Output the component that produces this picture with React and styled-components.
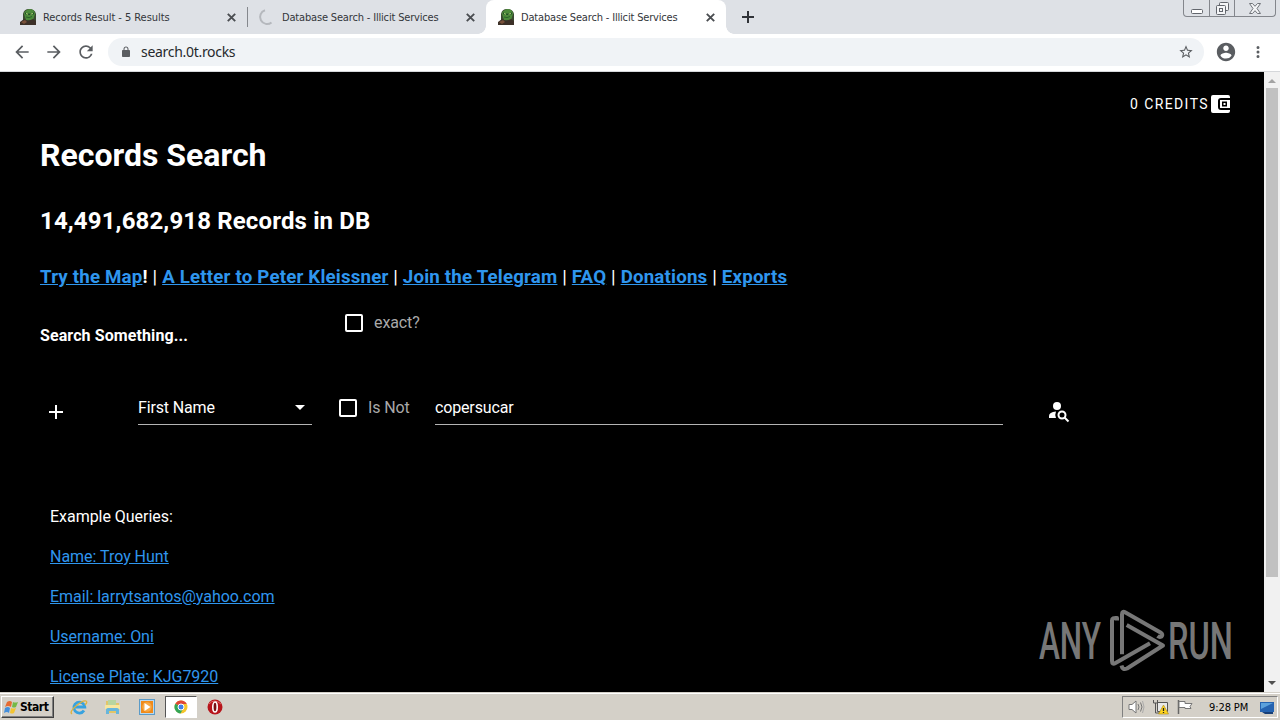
import React, { Component } from 'react';
import styled, { createGlobalStyle } from 'styled-components';

const GlobalStyle = createGlobalStyle`
  *,
  *::before,
  *::after {
    box-sizing: border-box;
  }

  body {
    margin: 0;
    overflow: hidden;
    font-family: Roboto, 'Liberation Sans', sans-serif;
  }

  svg {
    display: block;
    flex: none;
    overflow: visible;
  }
`;

const Screen = styled.div`
  width: 1280px;
  height: 720px;
  display: flex;
  flex-direction: column;
  overflow: hidden;
`;

/* browser window */
const TabStrip = styled.div`
  height: 34px;
  flex: none;
  display: flex;
  background: #dee1e6;
`;

const StyledTab = styled.div`
  width: ${({ $width }) => $width}px;
  height: 34px;
  padding: 0 11px 0 ${({ $left }) => $left}px;
  display: flex;
  align-items: center;
  position: relative;
  background: ${({ $active }) => ($active ? '#fff' : 'transparent')};
  border-radius: 8px 8px 0 0;
  color: #33363a;

  .tab-title {
    margin-left: 7px;
    padding-top: 2px;
    flex: 1;
    font: 11px/16px 'DejaVu Sans Condensed', 'DejaVu Sans', sans-serif;
    font-stretch: condensed;
    letter-spacing: ${({ $spacing }) => $spacing || -0.17}px;
    white-space: nowrap;
  }

  &::before,
  &::after {
    content: '';
    display: ${({ $active }) => ($active ? 'block' : 'none')};
    position: absolute;
    bottom: 0;
    width: 8px;
    height: 8px;
  }

  &::before {
    left: -8px;
    background: radial-gradient(circle at 0 0, transparent 7.5px, #fff 8px);
  }

  &::after {
    right: -8px;
    background: radial-gradient(circle at 100% 0, transparent 7.5px, #fff 8px);
  }
`;

const TabDivider = styled.div`
  width: 1px;
  height: 20px;
  margin-top: 7px;
  background: #85888d;
`;

const NewTab = styled.div`
  padding: 11px 0 0 16px;
  flex: 1;
`;

const WindowButtons = styled.div`
  width: 93px;
  height: 17px;
  margin-right: 4px;
  display: flex;
  border: 1px solid #83868c;
  border-top: 0;
  border-radius: 0 0 4px 4px;

  span {
    display: flex;
    align-items: center;
    justify-content: center;
    width: 25px;
  }

  span + span {
    border-left: 1px solid #83868c;
  }

  span:last-child {
    flex: 1;
  }
`;

const Toolbar = styled.div`
  height: 38px;
  flex: none;
  display: flex;
  align-items: center;
  padding: 0 13px 2px 12px;
  background: #fff;
  border-bottom: 1px solid #d5d7da;
`;

const NavIcon = styled.div`
  width: 32px;
  display: flex;
`;

const Omnibox = styled.div`
  width: 1096px;
  height: 28px;
  padding: 0 10px 0 12px;
  display: flex;
  align-items: center;
  border-radius: 14px;
  background: #f0f3f6;

  span {
    flex: 1;
    margin-left: 9px;
    color: #26292c;
    font: 14px/18px 'Noto Sans', 'Open Sans', sans-serif;
    letter-spacing: -0.3px;
  }
`;

const ToolbarEnd = styled.div`
  flex: 1;
  padding-left: 11px;
  display: flex;
  align-items: center;
  justify-content: space-between;
`;

const Viewport = styled.div`
  height: 620px;
  flex: none;
  display: flex;
  background: #000;
`;

const Page = styled.main`
  width: 1264px;
  height: 620px;
  padding: 14px 33px 0 40px;
  position: relative;
  overflow: hidden;
  color: #fff;
  font-size: 16px;
  white-space: nowrap;

  a {
    color: #2f96ee;
    text-decoration: underline;
  }
`;

const Credits = styled.div`
  height: 36px;
  display: flex;
  align-items: center;
  justify-content: flex-end;
  gap: 2px;
  font-size: 14px;
  letter-spacing: 1.4px;
`;

const Title = styled.h1`
  margin: 14px 0 0;
  font-size: 32px;
  line-height: 38px;
  font-weight: 700;
`;

const Count = styled.h2`
  margin: 33px 0 0;
  font-size: 24px;
  line-height: 28px;
  font-weight: 700;
  letter-spacing: 0.14px;
`;

const Links = styled.h3`
  margin: 30px 0 0;
  font-size: 18.72px;
  line-height: 24px;
  font-weight: 700;
  letter-spacing: 0.18px;

  i {
    font-style: normal;
    font-weight: 400;
  }
`;

const SearchHeader = styled.div`
  height: 44px;
  margin-top: 13px;
  display: flex;

  strong {
    width: 305px;
    padding-top: 23px;
    font-weight: 700;
    line-height: 21px;
    letter-spacing: 0.1px;
  }
`;

const CheckField = styled.div`
  height: 18px;
  display: flex;
  align-items: center;
  gap: 11px;
  line-height: 18px;
  letter-spacing: -0.1px;
  color: #a9a9a9;

  &::before {
    content: '';
    width: 18px;
    height: 18px;
    border: 2px solid #fff;
    border-radius: 2px;
  }
`;

const ExactCheck = styled(CheckField)`
  margin-top: 12px;
`;

const NegateCheck = styled(CheckField)`
  width: 96px;
  margin: 7px 0 0 27px;
`;

const QueryRow = styled.div`
  height: 40px;
  margin-top: 46px;
  display: flex;

  .add {
    width: 98px;
    padding: 12px 0 0 8px;
  }

  .find {
    padding: 9px 0 0 45px;
  }
`;

const Field = styled.div`
  width: ${({ $width }) => $width}px;
  height: 33px;
  display: flex;
  align-items: center;
  justify-content: space-between;
  border-bottom: 1px solid #b4b4b4;
  padding: 0 7px 2px 0;
  letter-spacing: -0.15px;
`;

const Examples = styled.div`
  margin: 75px 0 0 10px;
  display: flex;
  flex-direction: column;
  align-items: flex-start;
  gap: 20px;
  line-height: 20px;
  letter-spacing: -0.03px;
`;

const Watermark = styled.div`
  position: absolute;
  left: 1036px;
  top: 536px;
`;

const Scrollbar = styled.div`
  width: 16px;
  display: flex;
  flex-direction: column;
  align-items: center;
  justify-content: space-between;
  padding: 6px 0;
  background: #f1f1f1;

  .thumb {
    width: 12px;
    height: 489px;
    margin: 5px 0 auto;
    background: #c1c1c1;
  }
`;

/* desktop taskbar */
const Taskbar = styled.div`
  height: 28px;
  display: flex;
  align-items: center;
  padding: 2px 2px 0 1px;
  background: #d4d0c8;
  box-shadow: inset 0 1px #d4d0c8, inset 0 2px #fff;
`;

const StartButton = styled.div`
  width: 53px;
  height: 22px;
  padding-left: 2px;
  display: flex;
  align-items: center;
  gap: 1px;
  border: 1px solid;
  border-color: #fff #404040 #404040 #fff;
  box-shadow: inset -1px -1px #808080;
  color: #000;
  font: bold 12px/16px 'DejaVu Sans Condensed', 'DejaVu Sans', sans-serif;
  font-stretch: condensed;
  letter-spacing: -0.45px;
`;

const QuickLaunch = styled.div`
  flex: 1;
  margin-left: 8px;
  display: flex;
  align-items: center;
`;

const TaskIcon = styled.div`
  width: ${({ $pressed }) => ($pressed ? 32 : 34)}px;
  height: 22px;
  margin: 0 ${({ $pressed }) => ($pressed ? 1 : 0)}px;
  display: flex;
  align-items: center;
  justify-content: center;
  background: ${({ $pressed }) => ($pressed ? '#fff' : 'none')};
  border: ${({ $pressed }) => ($pressed ? '1px solid' : 0)};
  border-color: #555 #fff #fff #555;
`;

const Tray = styled.div`
  width: 156px;
  height: 22px;
  display: flex;
  align-items: center;
  padding-left: 5px;
  border: 1px solid;
  border-color: #808080 #fff #fff #808080;

  span {
    margin: 0 9px 0 15px;
    padding-top: 1px;
    width: 41px;
    font: 11px/16px 'DejaVu Sans Condensed', 'DejaVu Sans', sans-serif;
    font-stretch: condensed;
    letter-spacing: -0.1px;
    white-space: nowrap;
    color: #000;
  }
`;

const TrayIcon = styled.div`
  width: 24px;
`;

const FrogIcon = () => (
  <svg width="16" height="16" viewBox="0 0 16 16">
    <path d="M3 11V5Q4 0 9 0q6 0 7 5v11H4z" fill="#3a4a31" />
    <path d="M4 5Q4 2 7 1q3-2 6 0 2 1 2 4l-2 6H6z" fill="#4c8a3a" />
    <path d="M5 3.5l4 1.2 5-1.2v1.8l-4 .8-5-.8z" fill="#1f4a26" />
    <path d="M6 4.5l2 .7M10.5 5.2l2.5-.7" stroke="#b4dc76" />
    <path d="M6 8q3 1.5 6-.5" stroke="#2b632b" fill="none" />
    <path d="M0 16v-3l4-3 4 2 5-2 3 2v4z" fill="#3c3028" />
    <path d="M1 13l4-2 2 2-3 2z" fill="#79513a" />
  </svg>
);

const CloseIcon = () => (
  <svg width="9" height="9" viewBox="0 0 9 9">
    <path d="M.8.8l7.4 7.4M8.2.8L.8 8.2" stroke="#4a4d51" strokeWidth="1.9" />
  </svg>
);

const Tab = ({ title, loading, ...rest }) => (
  <StyledTab {...rest}>
    {loading ? (
      <svg width="16" height="16" viewBox="0 0 16 16">
        <path d="M6 1.3A7 7 0 1 0 12.5 13.4" fill="none" stroke="#b5b8bd" strokeWidth="2" />
      </svg>
    ) : (
      <FrogIcon />
    )}
    <span className="tab-title">{title}</span>
    <CloseIcon />
  </StyledTab>
);

const MaterialIcon = ({ d, size = 20, color = '#5a5d61' }) => (
  <svg width={size} height={size} viewBox="0 0 24 24" fill={color}>
    <path d={d} />
  </svg>
);

const BACK = 'M20 11H7.83l5.59-5.59L12 4l-8 8 8 8 1.41-1.41L7.83 13H20v-2z';
const FORWARD = 'M12 4l-1.41 1.41L16.17 11H4v2h12.17l-5.58 5.59L12 20l8-8z';
const RELOAD =
  'M17.65 6.35A7.958 7.958 0 0 0 12 4c-4.42 0-7.99 3.58-7.99 8s3.57 8 7.99 8c3.73 0 6.84-2.55 7.73-6h-2.08A5.99 5.99 0 0 1 12 18c-3.31 0-6-2.69-6-6s2.69-6 6-6c1.66 0 3.14.69 4.22 1.78L13 11h7V4l-2.35 2.35z';
const LOCK =
  'M18 8h-1V6c0-2.76-2.24-5-5-5S7 3.24 7 6v2H6c-1.1 0-2 .9-2 2v10c0 1.1.9 2 2 2h12c1.1 0 2-.9 2-2V10c0-1.1-.9-2-2-2zM9 6c0-1.66 1.34-3 3-3s3 1.34 3 3v2H9V6z';
const STAR =
  'M22 9.24l-7.19-.62L12 2 9.19 8.63 2 9.24l5.46 4.73L5.82 21 12 17.27 18.18 21l-1.63-7.03L22 9.24zM12 15.4l-3.76 2.27 1-4.28-3.32-2.88 4.38-.38L12 6.1l1.71 4.04 4.38.38-3.32 2.88 1 4.28L12 15.4z';
const ACCOUNT =
  'M12 2C6.48 2 2 6.48 2 12s4.48 10 10 10 10-4.48 10-10S17.52 2 12 2zm0 3c1.66 0 3 1.34 3 3s-1.34 3-3 3-3-1.34-3-3 1.34-3 3-3zm0 14.2c-2.5 0-4.71-1.28-6-3.22.03-1.99 4-3.08 6-3.08 1.99 0 5.97 1.09 6 3.08A7.2 7.2 0 0 1 12 19.2z';
const MORE = 'M12 8a2 2 0 1 0 0-4 2 2 0 0 0 0 4zm0 2a2 2 0 1 0 0 4 2 2 0 0 0 0-4zm0 6a2 2 0 1 0 0 4 2 2 0 0 0 0-4z';

const LINKS = ['A Letter to Peter Kleissner', 'Join the Telegram', 'FAQ', 'Donations', 'Exports'];
const QUERIES = ['Name: Troy Hunt', 'Email: larrytsantos@yahoo.com', 'Username: Oni', 'License Plate: KJG7920'];

const AnyRunLogo = () => (
  <svg width="206" height="66" viewBox="0 0 206 66" fill="#777">
    <text x="3" y="51" fontFamily="Roboto" fontSize="52" fontWeight="500" textLength="62" lengthAdjust="spacingAndGlyphs">
      ANY
    </text>
    <text x="132" y="51" fontFamily="Roboto" fontSize="52" fontWeight="500" textLength="65" lengthAdjust="spacingAndGlyphs">
      RUN
    </text>
    <g fill="none" stroke="#777" strokeWidth="4" strokeLinejoin="round">
      <path d="M81 12.5V10q-5-.5-5 2.5V53q0 4 3.5 2L114 35.3" />
      <path d="M86 46.3V6.5q0-4 3.5-2L124.5 24.5q3 2 1 4-2 1-4-.5" />
      <path d="M90.7 17L127 37.5 91 60.5q-4.5 2-5.5-3" />
    </g>
  </svg>
);

class App extends Component {
  renderBrowser() {
    return (
      <>
        <TabStrip>
          <Tab $width={247} $left={20} $spacing={-0.05} title="Records Result - 5 Results" />
          <TabDivider />
          <Tab $width={238} $left={11} loading title="Database Search - Illicit Services" />
          <Tab $width={240} $left={12} $active title="Database Search - Illicit Services" />
          <NewTab>
            <svg width="12" height="12" viewBox="0 0 12 12">
              <path d="M6 0v12M0 6h12" stroke="#303338" strokeWidth="2" />
            </svg>
          </NewTab>
          <WindowButtons>
            <span>
              <svg width="12" height="14" viewBox="0 0 12 14">
                <rect x=".5" y="8.5" width="11" height="4" rx="1" fill="#fff" stroke="#62666d" />
              </svg>
            </span>
            <span>
              <svg width="13" height="13" viewBox="0 0 13 13" fill="#f4f5f7" stroke="#62666d">
                <rect x="3.5" y=".5" width="9" height="8" rx="1" />
                <rect x=".5" y="3.5" width="9" height="9" rx="1" />
                <rect x="3.5" y="6.5" width="3" height="3" />
              </svg>
            </span>
            <span>
              <svg width="12" height="11" viewBox="0 0 12 11">
                <path d="M.5.5h3L6 3.3 8.5.5h3L8 5.5l3.5 5h-3L6 7.7l-2.5 2.8h-3L4 5.5z" fill="#f4f5f7" stroke="#70747a" />
              </svg>
            </span>
          </WindowButtons>
        </TabStrip>
        <Toolbar>
          <NavIcon>
            <MaterialIcon d={BACK} />
          </NavIcon>
          <NavIcon>
            <MaterialIcon d={FORWARD} />
          </NavIcon>
          <NavIcon>
            <MaterialIcon d={RELOAD} />
          </NavIcon>
          <Omnibox>
            <MaterialIcon d={LOCK} size={12} />
            <span>search.0t.rocks</span>
            <MaterialIcon d={STAR} size={16} />
          </Omnibox>
          <ToolbarEnd>
            <MaterialIcon d={ACCOUNT} size={22} />
            <MaterialIcon d={MORE} size={18} />
          </ToolbarEnd>
        </Toolbar>
      </>
    );
  }

  renderPage() {
    return (
      <Viewport>
        <Page>
          <Credits>
            <span>0 CREDITS</span>
            <svg width="20" height="18" viewBox="0 0 20 18">
              <path d="M2 0h15q2 0 2 2v1h-9q-3 0-3 3v6q0 3 3 3h9v1q0 2-2 2H2q-2 0-2-2V2q0-2 2-2z" fill="#fff" />
              <path d="M9 5h10v8H9z" fill="#fff" />
              <rect x="11" y="6.5" width="5" height="5" fill="#000" />
              <rect x="12.5" y="8" width="2" height="2" fill="#fff" />
            </svg>
          </Credits>
          <Title>Records Search</Title>
          <Count>14,491,682,918 Records in DB</Count>
          <Links>
            <a>Try the Map</a>!
            {LINKS.map(link => (
              <React.Fragment key={link}>
                <i> | </i>
                <a>{link}</a>
              </React.Fragment>
            ))}
          </Links>
          <SearchHeader>
            <strong>Search Something...</strong>
            <ExactCheck>exact?</ExactCheck>
          </SearchHeader>
          <QueryRow>
            <div className="add">
              <svg width="16" height="16" viewBox="0 0 16 16">
                <path d="M8 1v14M1 8h14" stroke="#fff" strokeWidth="2" />
              </svg>
            </div>
            <Field $width={174}>
              <span>First Name</span>
              <svg width="10" height="5" viewBox="0 0 10 5">
                <path d="M0 0h10L5 5z" fill="#fff" />
              </svg>
            </Field>
            <NegateCheck>Is Not</NegateCheck>
            <Field $width={568}>copersucar</Field>
            <div className="find">
              <svg width="22" height="22" viewBox="0 0 22 22">
                <circle cx="9" cy="5" r="4" fill="#fff" />
                <path d="M1 17v-2q0-4 7-4.5-1.5 3.5 0 6.5z" fill="#fff" />
                <circle cx="14" cy="14" r="3.5" fill="none" stroke="#fff" strokeWidth="2" />
                <path d="M16.5 16.5l4 4" stroke="#fff" strokeWidth="2" />
              </svg>
            </div>
          </QueryRow>
          <Examples>
            <span>Example Queries:</span>
            {QUERIES.map(query => (
              <a key={query}>{query}</a>
            ))}
          </Examples>
          <Watermark>
            <AnyRunLogo />
          </Watermark>
        </Page>
        <Scrollbar>
          <svg width="8" height="5" viewBox="0 0 8 5">
            <path d="M0 5h8L4 1z" fill="#a3a3a3" />
          </svg>
          <div className="thumb" />
          <svg width="8" height="5" viewBox="0 0 8 5">
            <path d="M0 0h8L4 4z" fill="#505050" />
          </svg>
        </Scrollbar>
      </Viewport>
    );
  }

  renderTaskbar() {
    return (
      <Taskbar>
        <StartButton>
          <svg width="15" height="15" viewBox="0 0 15 15">
            <path d="M3 2q3-2 5 0L7 7Q4 5 1 7z" fill="#e66b32" />
            <path d="M9 2q2 1 5 0l-2 5q-2 1-4 0z" fill="#74b947" />
            <path d="M1 8q3-2 5 0l-1 5q-2-2-5 0z" fill="#448fdc" />
            <path d="M7 8q2 1 5 0l-2 5q-2 1-4 0z" fill="#f3c431" />
          </svg>
          Start
        </StartButton>
        <QuickLaunch>
          <TaskIcon>
            <svg width="18" height="18" viewBox="0 0 18 18" fill="none">
              <path d="M14 12.5a5.5 5.5 0 1 1 .8-3.5H5" stroke="#37a2df" strokeWidth="2.8" />
              <path d="M2 16q-3-2 4-8 7-6 10-5 2 1-1 4" stroke="#dfb23b" strokeWidth="1.3" />
            </svg>
          </TaskIcon>
          <TaskIcon>
            <svg width="18" height="18" viewBox="0 0 18 18">
              <path d="M2 3h5l1 2h7v10H2z" fill="#e2c568" />
              <path d="M4 2h8v5H4z" fill="#b7d5a0" />
              <path d="M1 7h15v4H1z" fill="#f7e69f" />
              <path d="M2 16v-4q0-2 2-2h9q2 0 2 2v4h-3v-3H5v3z" fill="#67b6dc" />
            </svg>
          </TaskIcon>
          <TaskIcon>
            <svg width="16" height="16" viewBox="0 0 16 16">
              <rect x=".5" y=".5" width="15" height="15" fill="#b9d8ef" stroke="#5b9bc8" />
              <rect x="2" y="2" width="12" height="12" fill="#f08a19" />
              <circle cx="8" cy="8" r="4.8" fill="#f7a845" />
              <path d="M5.5 4l6 4-6 4z" fill="#fff" />
            </svg>
          </TaskIcon>
          <TaskIcon $pressed>
            <svg width="14" height="14" viewBox="0 0 14 14">
              <circle cx="7" cy="7" r="6.5" fill="#f5c52c" />
              <path d="M7 7L1.3 3.8A6.5 6.5 0 0 1 12.8 4H7z" fill="#df4636" />
              <path d="M7 7L1.3 3.8A6.5 6.5 0 0 0 6.5 13.5L9 9z" fill="#33a557" />
              <circle cx="7" cy="7" r="3" fill="#3f7fe8" stroke="#fff" />
            </svg>
          </TaskIcon>
          <TaskIcon>
            <svg width="16" height="16" viewBox="0 0 16 16">
              <circle cx="8" cy="8" r="7.5" fill="#b7141b" />
              <path d="M2 5q5-6 12 0" stroke="#e06464" fill="none" />
              <ellipse cx="8" cy="8" rx="2.2" ry="5" fill="#791014" stroke="#fff" strokeWidth="1.6" />
            </svg>
          </TaskIcon>
        </QuickLaunch>
        <Tray>
          <TrayIcon>
            <svg width="17" height="16" viewBox="0 0 17 16" fill="none" stroke="#777">
              <path d="M1 5.5h3L8 2v12l-4-3.5H1z" fill="#fff" />
              <path d="M10 5q2 3 0 6M12.5 3.5q3 4.5 0 9" />
              <path d="M14.5 2q3 6 0 12" stroke="#aaa" />
            </svg>
          </TrayIcon>
          <TrayIcon>
            <svg width="18" height="16" viewBox="0 0 18 16">
              <path d="M5.5 3.5h10v9h-10z" fill="#e8e8e8" stroke="#555" />
              <path d="M1.5 1v3h4V1M3.5 4v10h5" fill="none" stroke="#555" />
              <path d="M11.5 6l5 9h-10z" fill="#ffd51f" stroke="#a98612" strokeWidth=".6" />
              <path d="M11.5 9v3M11.5 13v1" stroke="#222" strokeWidth="1.3" />
            </svg>
          </TrayIcon>
          <svg width="18" height="16" viewBox="0 0 18 16">
            <path d="M2.5 1v14" stroke="#666" strokeWidth="1.5" />
            <path d="M3 2.5h6v2h7l-2 3 1 2H9v-1H3z" fill="#fff" stroke="#777" />
          </svg>
          <span>9:28 PM</span>
          <svg width="16" height="15" viewBox="0 0 16 15">
            <path d="M1 2h14v10H1z" fill="#2563b0" />
            <path d="M2 3h12L2 9z" fill="#5ba1dc" />
            <path d="M3 12h11v2H6z" fill="#173f77" />
          </svg>
        </Tray>
      </Taskbar>
    );
  }

  render() {
    return (
      <Screen>
        <GlobalStyle />
        {this.renderBrowser()}
        {this.renderPage()}
        {this.renderTaskbar()}
      </Screen>
    );
  }
}

export default App;
